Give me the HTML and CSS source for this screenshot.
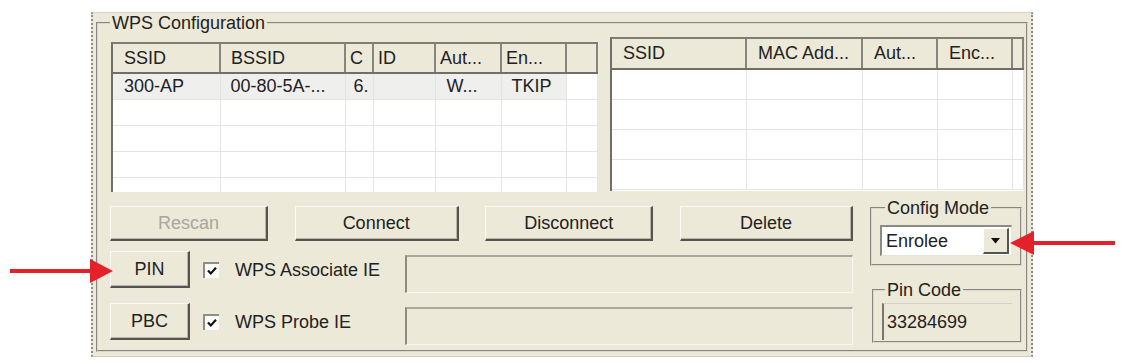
FILE: index.html
```html
<!DOCTYPE html>
<html>
<head>
  <meta charset="utf-8">
  <title>WPS Configuration</title>
  <link rel="stylesheet" href="styles.css">
</head>
<body>
  <div class="page">
    <div class="window">
      <fieldset class="group wps">
        <legend>WPS Configuration</legend>

        <div class="lists">
          <div class="list list-ap">
            <table>
              <colgroup>
                <col style="width:107px"><col style="width:125px"><col style="width:28px">
                <col style="width:62px"><col style="width:66px"><col style="width:65px"><col>
              </colgroup>
              <thead>
                <tr><th>SSID</th><th>BSSID</th><th class="tight">C</th><th class="tight">ID</th><th class="tight">Aut...</th><th class="tight">En...</th><th></th></tr>
              </thead>
              <tbody>
                <tr class="current"><td>300-AP</td><td>00-80-5A-...</td><td class="tight">6.</td><td></td><td>W...</td><td>TKIP</td><td class="blank"></td></tr>
                <tr><td></td><td></td><td></td><td></td><td></td><td></td><td></td></tr>
                <tr><td></td><td></td><td></td><td></td><td></td><td></td><td></td></tr>
                <tr><td></td><td></td><td></td><td></td><td></td><td></td><td></td></tr>
                <tr><td></td><td></td><td></td><td></td><td></td><td></td><td></td></tr>
              </tbody>
            </table>
          </div>

          <div class="list list-sta">
            <table>
              <colgroup>
                <col style="width:134px"><col style="width:116px"><col style="width:75px"><col style="width:75px"><col>
              </colgroup>
              <thead>
                <tr><th>SSID</th><th>MAC Add...</th><th>Aut...</th><th>Enc...</th><th></th></tr>
              </thead>
              <tbody>
                <tr><td></td><td></td><td></td><td></td><td></td></tr>
                <tr><td></td><td></td><td></td><td></td><td></td></tr>
                <tr><td></td><td></td><td></td><td></td><td></td></tr>
                <tr><td></td><td></td><td></td><td></td><td></td></tr>
              </tbody>
            </table>
          </div>
        </div>

        <div class="controls">
          <div class="actions">
            <div class="button-row">
              <button class="btn btn-rescan" disabled>Rescan</button>
              <button class="btn btn-connect">Connect</button>
              <button class="btn btn-disconnect">Disconnect</button>
              <button class="btn btn-delete">Delete</button>
            </div>

            <div class="ie-row">
              <button class="btn btn-small">PIN</button>
              <span class="check">
                <svg width="12" height="12" viewBox="0 0 12 12"><path d="M2 5.5 L4.8 8.5 L10 2.8" fill="none" stroke="#111" stroke-width="2.2"/></svg>
              </span>
              <span class="check-label">WPS Associate IE</span>
              <span class="field"></span>
            </div>

            <div class="ie-row">
              <button class="btn btn-small">PBC</button>
              <span class="check">
                <svg width="12" height="12" viewBox="0 0 12 12"><path d="M2 5.5 L4.8 8.5 L10 2.8" fill="none" stroke="#111" stroke-width="2.2"/></svg>
              </span>
              <span class="check-label">WPS Probe IE</span>
              <span class="field"></span>
            </div>
          </div>

          <div class="side">
            <fieldset class="group mode">
              <legend>Config Mode</legend>
              <div class="combo">
                <span class="combo-value">Enrolee</span>
                <span class="combo-button">
                  <svg width="9" height="6" viewBox="0 0 9 6"><path d="M0 0 H9 L4.5 5.5 Z" fill="#111"/></svg>
                </span>
              </div>
            </fieldset>

            <fieldset class="group pin">
              <legend>Pin Code</legend>
              <div class="pin-value">33284699</div>
            </fieldset>
          </div>
        </div>
      </fieldset>
    </div>

    <div class="arrow arrow-left"></div>
    <div class="arrow arrow-right"></div>
  </div>
</body>
</html>
```

FILE: styles.css
```css
body {
  margin: 0;
  background-color: #fff;
  font-family: "Liberation Sans", Arial, sans-serif;
  font-size: 18px;
  color: #222;
}

.page {
  position: relative;
  width: 1121px;
  height: 362px;
  padding: 12px 0 0 91px;
  box-sizing: border-box;
}

.window {
  display: flex;
  width: 942px;
  height: 345px;
  box-sizing: border-box;
  padding: 0 3px 4px;
  background-color: #ece9d8;
  border-left: 2px dotted #8c8c8c;
  border-right: 2px dotted #8c8c8c;
  border-top: 1px solid #d6d4c8;
  border-bottom: 1px solid #cfcdc1;
}

.group {
  margin: 0;
  border: 2px groove #dcd9cc;
  min-width: 0;
}

.group legend {
  padding: 0 2px;
  line-height: 20px;
}

.wps {
  flex: 1;
  padding: 0 0 0 12px;
}

/* list views */
.lists {
  display: flex;
  align-items: flex-start;
  gap: 12px;
}

.list {
  background-color: #fff;
  border-left: 2px solid #6f6e68;
  border-top: 2px solid #7d7c75;
  overflow: hidden;
  box-sizing: border-box;
}

.list-ap {
  width: 487px;
  height: 150px;
  margin: 9px 0 0 1px;
}

.list-sta {
  width: 414px;
  height: 154px;
  margin-top: 4px;
}

.list table {
  width: 100%;
  table-layout: fixed;
  border-collapse: collapse;
}

.list th {
  height: 28px;
  padding: 0 0 0 10px;
  text-align: left;
  font-weight: normal;
  background-color: #ece9d8;
  border-right: 2px solid #86857e;
  border-bottom: 2px solid #6f6e68;
  white-space: nowrap;
  overflow: hidden;
}

.list td {
  height: 25px;
  padding: 0 0 0 10px;
  border-right: 1px solid #e4e4e2;
  border-bottom: 1px solid #e4e4e2;
  white-space: nowrap;
  overflow: hidden;
}

.list .tight {
  padding-left: 4px;
}

.list-ap th:first-child,
.list-ap td:first-child {
  padding-left: 11px;
}

.list-ap td:nth-child(3) {
  padding-left: 8px;
}

.list-ap td:nth-child(5) {
  padding-left: 11px;
}

.list-ap td:nth-child(6) {
  padding-left: 10px;
}

.list-ap .current td {
  background-color: #efefee;
}

.list-ap .current td.blank {
  background-color: #fff;
}

.list-sta th {
  height: 29px;
  padding-left: 11px;
}

.list-sta td {
  height: 29px;
}

/* controls under the lists */
.controls {
  display: flex;
  gap: 17px;
  margin-top: 6px;
}

.actions {
  width: 743px;
  padding-top: 8px;
}

.button-row {
  display: flex;
  justify-content: space-between;
}

.btn {
  height: 35px;
  padding: 0;
  font-family: inherit;
  font-size: 18px;
  color: #222;
  background-color: #ece9d8;
  border-top: 1px solid #fbfaf6;
  border-left: 1px solid #fbfaf6;
  border-right: 2px solid #55544e;
  border-bottom: 2px solid #55544e;
  box-shadow: inset -1px -1px #b9b6a8;
}

.btn:disabled {
  color: #a9a79e;
}

.btn-rescan { width: 158px; }
.btn-connect { width: 164px; }
.btn-disconnect { width: 168px; }
.btn-delete { width: 173px; }

.ie-row {
  display: flex;
  align-items: flex-start;
  margin-top: 10px;
}

.btn-small {
  width: 80px;
  height: 37px;
}

.check {
  display: flex;
  align-items: center;
  justify-content: center;
  width: 16px;
  height: 16px;
  margin: 11px 0 0 13px;
  background-color: #fbfbf9;
  border-top: 2px solid #8e8d86;
  border-left: 2px solid #8e8d86;
  box-sizing: border-box;
}

.check-label {
  flex: 1;
  margin: 8px 0 0 16px;
  line-height: 22px;
}

.field {
  width: 448px;
  height: 38px;
  margin-top: 4px;
  box-sizing: border-box;
  border-top: 2px solid #aaa89d;
  border-left: 2px solid #8b8a81;
  border-right: 1px solid #f7f6f1;
  border-bottom: 1px solid #f7f6f1;
}

/* right side groups */
.side {
  width: 152px;
}

.mode {
  padding: 0 8px 8px;
}

.mode legend {
  margin-left: 5px;
}

.combo {
  display: flex;
  align-items: center;
  height: 31px;
  margin-top: 7px;
  box-sizing: border-box;
  background-color: #fff;
  border-top: 2px solid #8b8a83;
  border-left: 2px solid #8b8a83;
  border-right: 1px solid #e6e4da;
  border-bottom: 1px solid #e6e4da;
}

.combo-value {
  flex: 1;
  padding-left: 4px;
}

.combo-button {
  display: flex;
  align-items: center;
  justify-content: center;
  width: 26px;
  height: 26px;
  margin-right: 2px;
  box-sizing: border-box;
  background-color: #ece9d8;
  border-right: 2px solid #55544e;
  border-bottom: 2px solid #55544e;
  border-top: 1px solid #fff;
  border-left: 1px solid #fff;
}

.pin {
  width: 150px;
  margin: 14px 0 0 2px;
  padding: 0 8px 1px;
  box-sizing: border-box;
}

.pin legend {
  margin-left: 3px;
}

.pin-value {
  height: 37px;
  margin-top: 3px;
  padding: 8px 0 0 3px;
  box-sizing: border-box;
  border-left: 2px solid #77766f;
  border-top: 1px solid #d2d0c4;
}

/* red annotation arrows */
.arrow {
  position: absolute;
  height: 4px;
  background-color: #e4202a;
}

.arrow::after {
  content: "";
  position: absolute;
  top: -10px;
  border-top: 12px solid transparent;
  border-bottom: 12px solid transparent;
}

.arrow-left {
  left: 10px;
  top: 269px;
  width: 82px;
}

.arrow-left::after {
  left: 80px;
  border-left: 23px solid #e4202a;
}

.arrow-right {
  left: 1034px;
  top: 241px;
  width: 81px;
}

.arrow-right::after {
  left: -24px;
  border-right: 24px solid #e4202a;
}
```
